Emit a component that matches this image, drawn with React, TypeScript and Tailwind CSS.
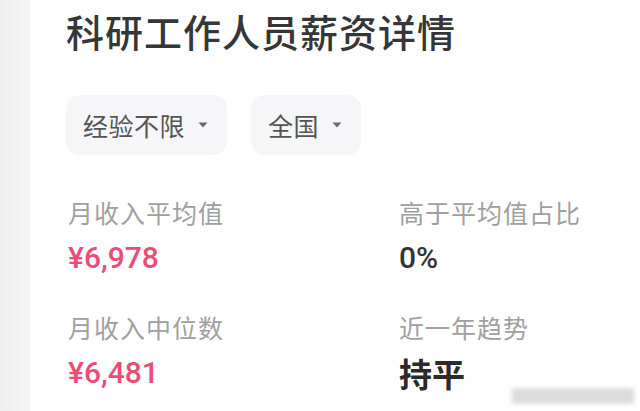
import { useMemo } from "react";

type Stat = {
  label: string;
  value: string;
  tone: "price" | "plain" | "strong";
};

const FILTERS = ["经验不限", "全国"];

const STATS: Stat[] = [
  { label: "月收入平均值", value: "¥6,978", tone: "price" },
  { label: "高于平均值占比", value: "0%", tone: "plain" },
  { label: "月收入中位数", value: "¥6,481", tone: "price" },
  { label: "近一年趋势", value: "持平", tone: "strong" },
];

const CJK = "font-['Noto_Sans_CJK_SC','Noto_Sans',sans-serif]";

function Caret() {
  return (
    <svg width="10" height="6" viewBox="0 0 10 6" aria-hidden="true">
      <path d="M0.5 0.5h9L5 5.5z" fill="#6b6b6b" />
    </svg>
  );
}

function FilterPill({ text }: { text: string }) {
  return (
    <button
      type="button"
      className="flex items-center h-[60px] pl-[17px] pr-[19px] gap-[13px] rounded-[14px] bg-[#f6f6f8] text-[25px] leading-[26px] tracking-[0.5px] text-[#555]"
    >
      <span>{text}</span>
      <Caret />
    </button>
  );
}

function StatCell({ stat }: { stat: Stat }) {
  const valueClass =
    stat.tone === "price"
      ? "text-[30px] leading-[32px] font-medium text-[#e94d75] font-['Roboto','Noto_Sans_CJK_SC',sans-serif]"
      : stat.tone === "plain"
        ? "text-[30px] leading-[32px] font-medium text-[#333] font-['Roboto','Noto_Sans_CJK_SC',sans-serif]"
        : "text-[33px] leading-[32px] font-bold text-[#2a2a2a]";

  return (
    <div className="flex flex-col gap-[17px]">
      <span className="text-[25px] leading-[26px] tracking-[1px] text-[#a0a0a0]">
        {stat.label}
      </span>
      <span className={valueClass}>{stat.value}</span>
    </div>
  );
}

export default function App() {
  const stats = useMemo(() => STATS, []);

  return (
    <div
      className={`relative flex w-[640px] h-[411px] overflow-hidden bg-white ${CJK}`}
    >
      <div className="w-[30px] shrink-0 bg-gradient-to-r from-[#eeeeee] to-[#f6f6f6]" />

      <div className="flex-1 pl-[36px]">
        <h1 className="mt-[12px] text-[38px] leading-[38px] tracking-[1px] font-medium text-[#363636]">
          科研工作人员薪资详情
        </h1>

        <div className="flex gap-[24px] mt-[45px]">
          {FILTERS.map((f) => (
            <FilterPill key={f} text={f} />
          ))}
        </div>

        <div className="grid grid-cols-[331px_1fr] gap-y-[40px] mt-[44px] pl-[2px]">
          {stats.map((s) => (
            <StatCell key={s.label} stat={s} />
          ))}
        </div>
      </div>

      {/* blurred watermark bottom right */}
      <div className="absolute left-[512px] top-[388px] w-[122px] h-[16px] bg-[#d4d4d4] blur-[2px] opacity-80" />
    </div>
  );
}
